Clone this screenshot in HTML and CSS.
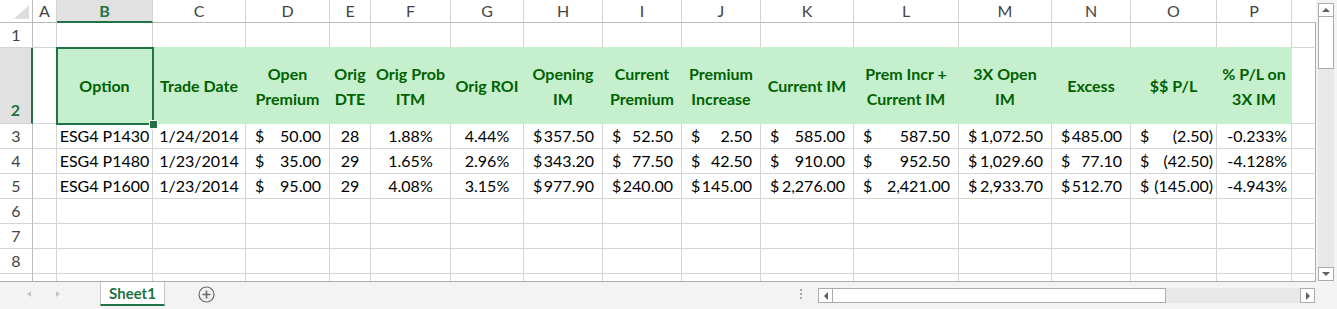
FILE: index.html
```html
<!DOCTYPE html>
<html lang="en">
<head>
    <meta charset="UTF-8">
    <title>Sheet1 - Excel</title>
    <link rel="stylesheet" href="styles.css">
</head>
<body>
    <div class="main">
        <div class="sheet">
            <!-- column letters -->
            <div class="c corner"></div>
            <div class="c colh">A</div>
            <div class="c colh on">B</div>
            <div class="c colh">C</div>
            <div class="c colh">D</div>
            <div class="c colh">E</div>
            <div class="c colh">F</div>
            <div class="c colh">G</div>
            <div class="c colh">H</div>
            <div class="c colh">I</div>
            <div class="c colh">J</div>
            <div class="c colh">K</div>
            <div class="c colh">L</div>
            <div class="c colh">M</div>
            <div class="c colh">N</div>
            <div class="c colh">O</div>
            <div class="c colh">P</div>
            <div class="c colh blank"></div>

            <!-- row 1 -->
            <div class="c rowh">1</div>
            <div class="c"></div>
            <div class="c above"></div><div class="c above"></div><div class="c above"></div><div class="c above"></div><div class="c above"></div>
            <div class="c above"></div><div class="c above"></div><div class="c above"></div><div class="c above"></div><div class="c above"></div>
            <div class="c above"></div><div class="c above"></div><div class="c above"></div><div class="c above"></div><div class="c above"></div>
            <div class="c edge"></div>

            <!-- row 2: headers -->
            <div class="c rowh on">2</div>
            <div class="c"></div>
            <div class="c hd picked">Option</div>
            <div class="c hd">Trade Date</div>
            <div class="c hd">Open<br>Premium</div>
            <div class="c hd">Orig<br>DTE</div>
            <div class="c hd">Orig Prob<br>ITM</div>
            <div class="c hd">Orig ROI</div>
            <div class="c hd">Opening<br>IM</div>
            <div class="c hd">Current<br>Premium</div>
            <div class="c hd">Premium<br>Increase</div>
            <div class="c hd">Current IM</div>
            <div class="c hd">Prem Incr +<br>Current IM</div>
            <div class="c hd">3X Open<br>IM</div>
            <div class="c hd">Excess</div>
            <div class="c hd">$$ P/L</div>
            <div class="c hd">% P/L on<br>3X IM</div>
            <div class="c edge"></div>

            <!-- row 3 -->
            <div class="c rowh">3</div>
            <div class="c"></div>
            <div class="c">ESG4 P1430</div>
            <div class="c">1/24/2014</div>
            <div class="c acct"><span>$</span><span>50.00</span></div>
            <div class="c">28</div>
            <div class="c">1.88%</div>
            <div class="c">4.44%</div>
            <div class="c acct"><span>$</span><span>357.50</span></div>
            <div class="c acct"><span>$</span><span>52.50</span></div>
            <div class="c acct"><span>$</span><span>2.50</span></div>
            <div class="c acct"><span>$</span><span>585.00</span></div>
            <div class="c acct"><span>$</span><span>587.50</span></div>
            <div class="c acct"><span>$</span><span>1,072.50</span></div>
            <div class="c acct"><span>$</span><span>485.00</span></div>
            <div class="c acct neg"><span>$</span><span>(2.50)</span></div>
            <div class="c right">-0.233%</div>
            <div class="c edge"></div>

            <!-- row 4 -->
            <div class="c rowh">4</div>
            <div class="c"></div>
            <div class="c">ESG4 P1480</div>
            <div class="c">1/23/2014</div>
            <div class="c acct"><span>$</span><span>35.00</span></div>
            <div class="c">29</div>
            <div class="c">1.65%</div>
            <div class="c">2.96%</div>
            <div class="c acct"><span>$</span><span>343.20</span></div>
            <div class="c acct"><span>$</span><span>77.50</span></div>
            <div class="c acct"><span>$</span><span>42.50</span></div>
            <div class="c acct"><span>$</span><span>910.00</span></div>
            <div class="c acct"><span>$</span><span>952.50</span></div>
            <div class="c acct"><span>$</span><span>1,029.60</span></div>
            <div class="c acct"><span>$</span><span>77.10</span></div>
            <div class="c acct neg"><span>$</span><span>(42.50)</span></div>
            <div class="c right">-4.128%</div>
            <div class="c edge"></div>

            <!-- row 5 -->
            <div class="c rowh">5</div>
            <div class="c"></div>
            <div class="c">ESG4 P1600</div>
            <div class="c">1/23/2014</div>
            <div class="c acct"><span>$</span><span>95.00</span></div>
            <div class="c">29</div>
            <div class="c">4.08%</div>
            <div class="c">3.15%</div>
            <div class="c acct"><span>$</span><span>977.90</span></div>
            <div class="c acct"><span>$</span><span>240.00</span></div>
            <div class="c acct"><span>$</span><span>145.00</span></div>
            <div class="c acct"><span>$</span><span>2,276.00</span></div>
            <div class="c acct"><span>$</span><span>2,421.00</span></div>
            <div class="c acct"><span>$</span><span>2,933.70</span></div>
            <div class="c acct"><span>$</span><span>512.70</span></div>
            <div class="c acct neg"><span>$</span><span>(145.00)</span></div>
            <div class="c right">-4.943%</div>
            <div class="c edge"></div>

            <!-- rows 6-8 empty -->
            <div class="c rowh">6</div>
            <div class="c"></div><div class="c"></div><div class="c"></div><div class="c"></div><div class="c"></div><div class="c"></div><div class="c"></div><div class="c"></div>
            <div class="c"></div><div class="c"></div><div class="c"></div><div class="c"></div><div class="c"></div><div class="c"></div><div class="c"></div><div class="c"></div>
            <div class="c edge"></div>

            <div class="c rowh">7</div>
            <div class="c"></div><div class="c"></div><div class="c"></div><div class="c"></div><div class="c"></div><div class="c"></div><div class="c"></div><div class="c"></div>
            <div class="c"></div><div class="c"></div><div class="c"></div><div class="c"></div><div class="c"></div><div class="c"></div><div class="c"></div><div class="c"></div>
            <div class="c edge"></div>

            <div class="c rowh">8</div>
            <div class="c"></div><div class="c"></div><div class="c"></div><div class="c"></div><div class="c"></div><div class="c"></div><div class="c"></div><div class="c"></div>
            <div class="c"></div><div class="c"></div><div class="c"></div><div class="c"></div><div class="c"></div><div class="c"></div><div class="c"></div><div class="c"></div>
            <div class="c edge"></div>

            <!-- row 9, cut off -->
            <div class="c rowh last"></div>
            <div class="c last"></div><div class="c last"></div><div class="c last"></div><div class="c last"></div><div class="c last"></div><div class="c last"></div><div class="c last"></div><div class="c last"></div>
            <div class="c last"></div><div class="c last"></div><div class="c last"></div><div class="c last"></div><div class="c last"></div><div class="c last"></div><div class="c last"></div><div class="c last"></div>
            <div class="c edge last"></div>
        </div>

        <div class="vscroll">
            <div class="sbtn"><span class="arrow up"></span></div>
            <div class="vthumb"></div>
            <div class="vtrack"></div>
            <div class="sbtn"><span class="arrow down"></span></div>
        </div>
    </div>

    <div class="tabbar">
        <div class="nav">
            <span class="arrow left light"></span>
            <span class="arrow right light"></span>
        </div>
        <div class="tab">Sheet1</div>
        <div class="add">
            <svg width="17" height="17" viewBox="0 0 17 17">
                <circle cx="8.5" cy="8.5" r="7.5" fill="none" stroke="#6a6a6a" stroke-width="1.2"/>
                <path d="M8.5 4.5v8M4.5 8.5h8" stroke="#6a6a6a" stroke-width="1.6"/>
            </svg>
        </div>
        <div class="spacer"></div>
        <div class="split"><i></i><i></i><i></i></div>
        <div class="hscroll">
            <div class="sbtn"><span class="arrow left"></span></div>
            <div class="hthumb"></div>
            <div class="htrack"></div>
            <div class="sbtn"><span class="arrow right"></span></div>
        </div>
    </div>
</body>
</html>
```

FILE: styles.css
```css
* {
    margin: 0;
    padding: 0;
    box-sizing: border-box;
}

body {
    font-family: Lato, "Open Sans", sans-serif;
    font-size: 16px;
    color: #000;
    background: #fff;
    width: 1337px;
    height: 309px;
    overflow: hidden;
}

.main {
    display: flex;
    height: 282px;
}

/* grid of cells */
.sheet {
    display: grid;
    grid-template-columns: 33px 24px 96px 93px 84px 41px 80px 73px 79px 79px 79px 93px 105px 93px 79px 86px 75px 24px;
    grid-template-rows: 23px 25px 76px repeat(6, 25px) 7px;
    width: 1316px;
    height: 282px;
    border-bottom: 1px solid #ababab;
}

.c {
    display: flex;
    align-items: flex-end;
    justify-content: center;
    border-right: 1px solid #d4d4d4;
    border-bottom: 1px solid #d4d4d4;
    line-height: 24px;
    white-space: nowrap;
    overflow: hidden;
}

.c.last {
    border-bottom: none;
}

.c.edge {
    border-right-color: #ababab;
}

.c.above {
    border-bottom-color: #c6efce;
}

.c.right {
    justify-content: flex-end;
    padding-right: 4px;
}

.c.acct {
    justify-content: space-between;
    padding: 0 8px 0 9px;
}

.c.acct.neg {
    padding-right: 3px;
}

/* headers */
.corner {
    position: relative;
    border-bottom-color: #bcbcbc;
    border-right-color: #bcbcbc;
}

.corner::after {
    content: "";
    position: absolute;
    right: 3px;
    bottom: 3px;
    border-left: 15px solid transparent;
    border-bottom: 14px solid #dedede;
}

.colh {
    align-items: center;
    color: #444;
    line-height: 1;
    border-bottom-color: #bcbcbc;
}

.colh.blank {
    border-right: none;
}

.colh.on,
.rowh.on {
    background: #e1e1e1;
    color: #217346;
    font-weight: 700;
}

.colh.on {
    border-bottom: 2px solid #217346;
}

.rowh {
    color: #444;
    border-right-color: #bcbcbc;
}

.rowh.on {
    border-right: 2px solid #217346;
    padding-bottom: 1px;
}

.hd {
    align-items: center;
    background: #c6efce;
    border-color: #c6efce;
    color: #006100;
    font-weight: 700;
    text-align: center;
    line-height: 25px;
}

/* active cell */
.picked {
    position: relative;
    overflow: visible;
}

.picked::before {
    content: "";
    position: absolute;
    top: -1px;
    left: -1px;
    right: -2px;
    bottom: -2px;
    border: 2px solid #217346;
    z-index: 1;
}

.picked::after {
    content: "";
    position: absolute;
    right: -6px;
    bottom: -6px;
    width: 7px;
    height: 7px;
    background: #217346;
    border: 1px solid #fff;
    z-index: 2;
}

/* scrollbars */
.vscroll {
    display: flex;
    flex-direction: column;
    width: 21px;
    padding: 3px 3px 1px 2px;
    background: #f3f3f3;
}

.sbtn {
    display: flex;
    align-items: center;
    justify-content: center;
    width: 16px;
    height: 14px;
    background: #fff;
    border: 1px solid #ababab;
}

.vthumb {
    height: 52px;
    background: #fff;
    border: 1px solid #ababab;
    border-top: none;
}

.vtrack {
    flex: 1;
    background: #e8e8e8;
}

.arrow {
    width: 0;
    height: 0;
    border: 3px solid transparent;
}

.arrow.up {
    border-top: none;
    border-left-width: 4px;
    border-right-width: 4px;
    border-bottom: 4px solid #5f5f5f;
}

.arrow.down {
    border-bottom: none;
    border-left-width: 4px;
    border-right-width: 4px;
    border-top: 4px solid #5f5f5f;
}

.arrow.left {
    border-left: none;
    border-top-width: 4px;
    border-bottom-width: 4px;
    border-right: 4px solid #5f5f5f;
}

.arrow.right {
    border-right: none;
    border-top-width: 4px;
    border-bottom-width: 4px;
    border-left: 4px solid #5f5f5f;
}

.arrow.light {
    border-top-width: 3px;
    border-bottom-width: 3px;
    border-left-color: transparent;
    border-right-color: transparent;
}

.arrow.left.light {
    border-right-color: #c4c4c4;
}

.arrow.right.light {
    border-left-color: #c4c4c4;
}

/* sheet tabs */
.tabbar {
    display: flex;
    height: 27px;
    background: #f3f3f3;
}

.nav {
    display: flex;
    align-items: center;
    gap: 25px;
    width: 100px;
    padding: 0 0 3px 27px;
}

.tab {
    width: 65px;
    height: 24px;
    padding-top: 3px;
    background: #fff;
    border-left: 1px solid #c6c6c6;
    border-right: 1px solid #c6c6c6;
    border-bottom: 2px solid #217346;
    color: #217346;
    font-size: 15px;
    font-weight: 700;
    text-align: center;
    line-height: 17px;
}

.add {
    margin: 4px 0 0 33px;
}

.spacer {
    flex: 1;
}

.split {
    display: flex;
    flex-direction: column;
    gap: 2px;
    width: 3px;
    margin: 7px 15px 0 0;
}

.split i {
    width: 2px;
    height: 2px;
    background: #a8a8a8;
}

.hscroll {
    display: flex;
    width: 497px;
    height: 15px;
    margin: 6px 22px 0 0;
}

.hscroll .sbtn {
    width: 15px;
    height: 15px;
}

.hthumb {
    width: 333px;
    background: #fff;
    border: 1px solid #ababab;
    border-left: none;
}

.htrack {
    flex: 1;
    background: #e8e8e8;
}
```
